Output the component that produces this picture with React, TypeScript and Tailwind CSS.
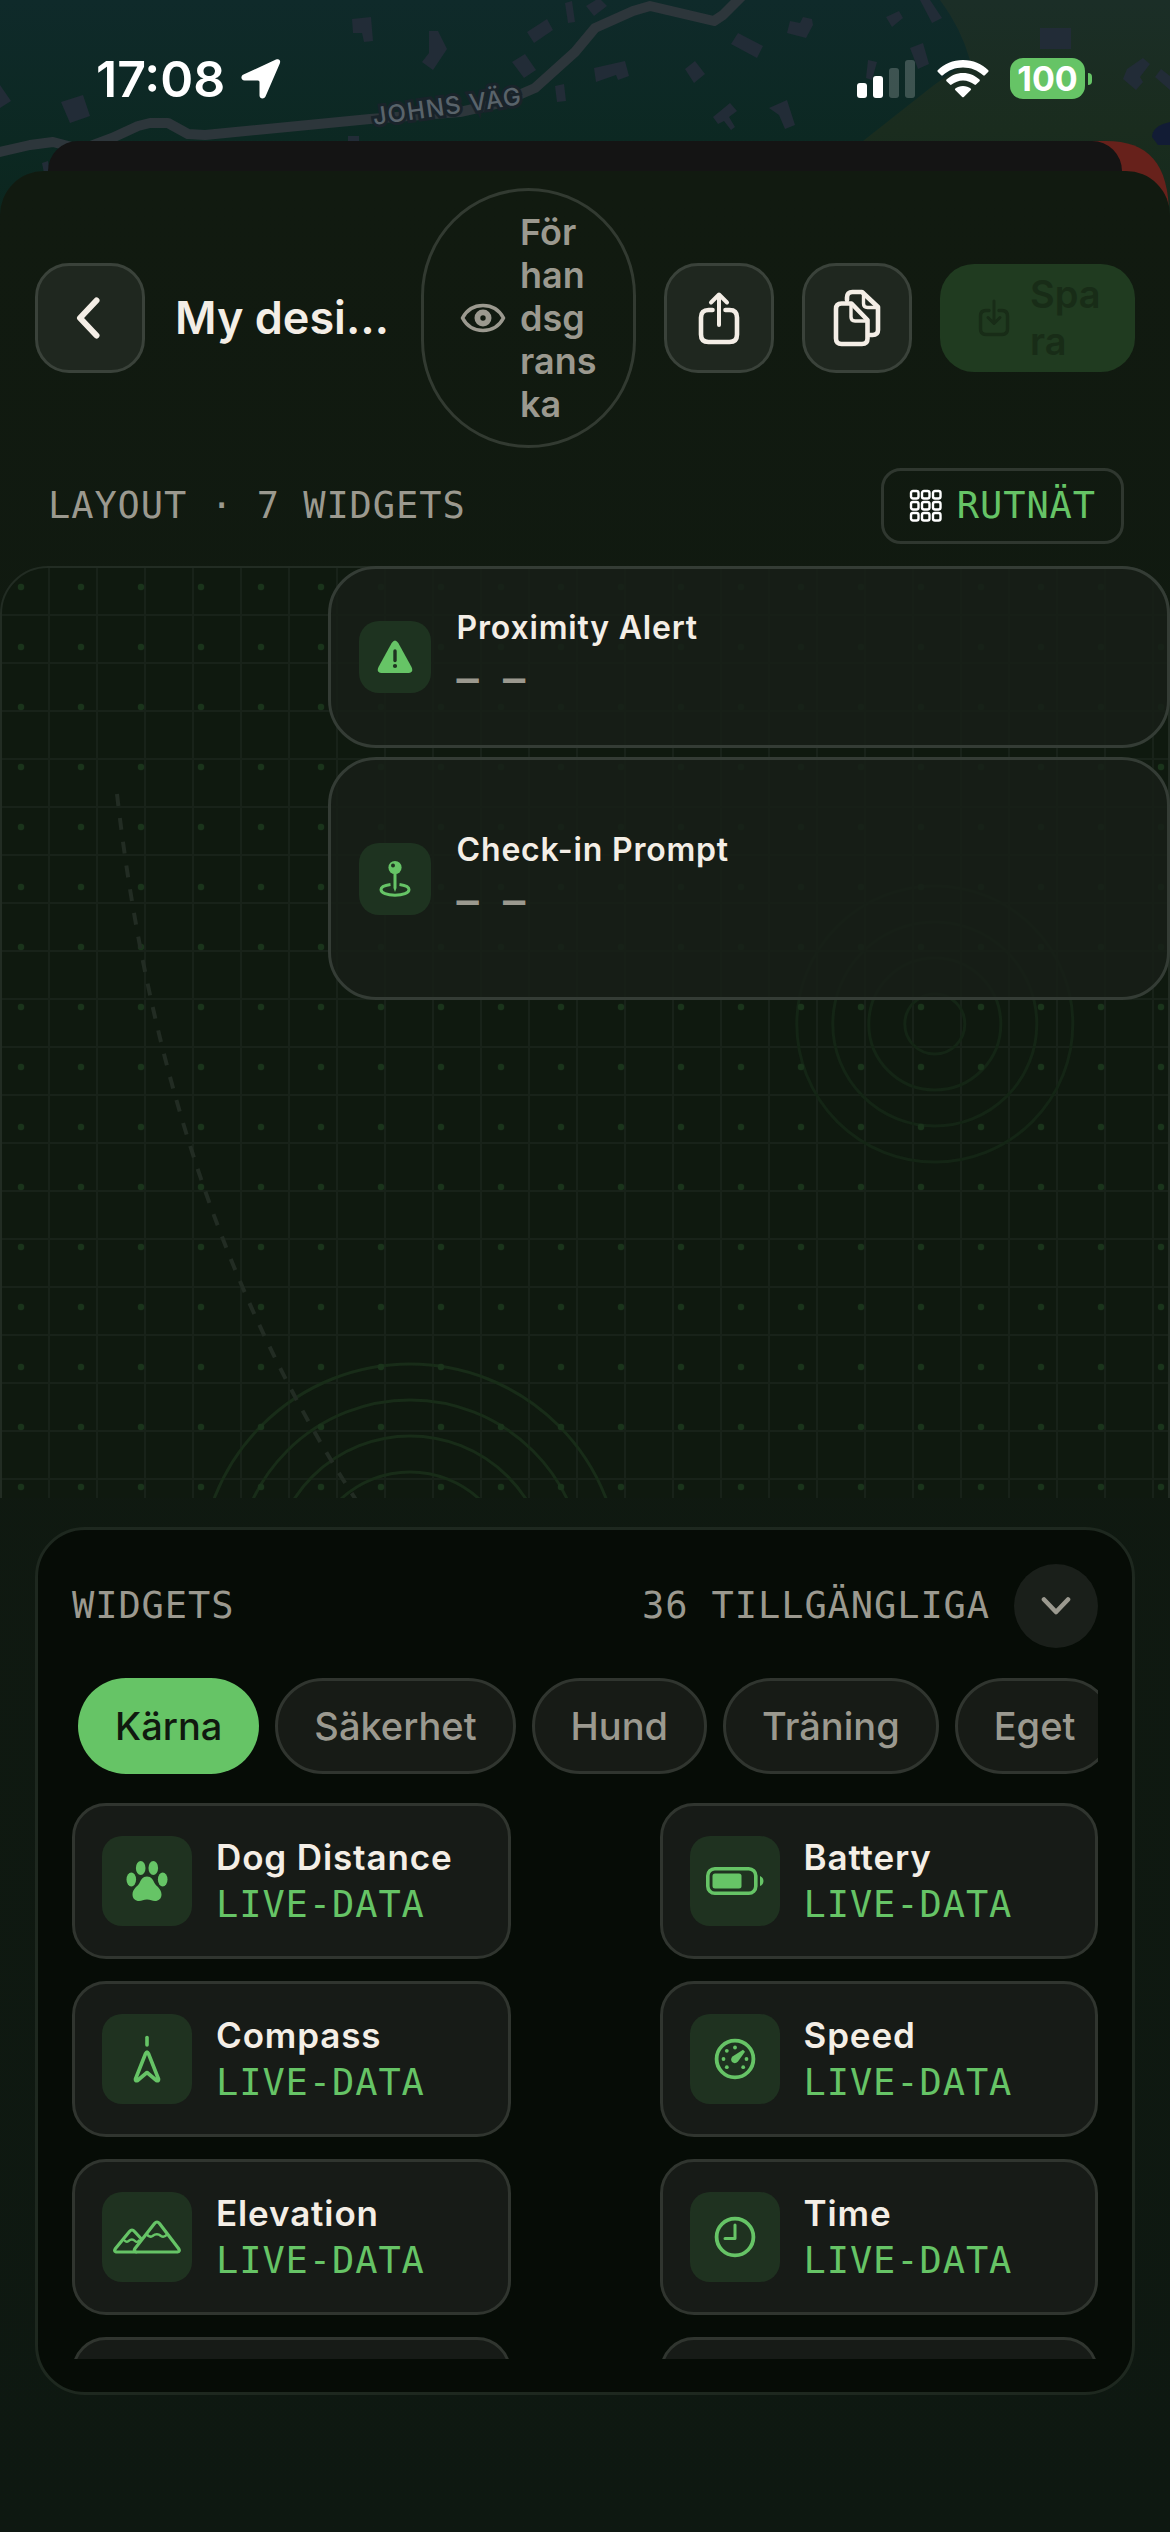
import type { ReactNode } from "react";

const buildings = [
  "352,19 371,17 373,41 364,42 362,33 353,33",
  "429,31 438,31 447,49 433,70 422,62 429,53",
  "527,32 547,19 553,30 534,43",
  "512,62 525,54 536,70 524,78",
  "555,86 564,84 566,101 557,102",
  "565,3 572,1 575,22 568,23",
  "586,6 599,-2 607,6 594,16",
  "594,68 625,61 629,76 618,80 616,75 596,82",
  "738,33 763,46 757,58 731,44",
  "790,21 800,23 803,17 812,19 813,25 806,38 787,33",
  "685,69 695,61 705,74 694,83",
  "713,117 730,103 737,111 729,117 735,127 731,130 724,121 718,124",
  "769,108 787,100 795,125 785,129 779,115",
  "886,17 899,11 903,18 892,27",
  "920,0 930,0 942,18 932,23",
  "910,48 923,43 929,64 918,69",
  "868,60 877,62 872,80 866,78",
  "1040,28 1071,28 1071,49 1040,49",
  "1143,58 1150,64 1140,77 1143,82 1136,90 1123,79 1127,69",
  "1155,77 1161,69 1170,76 1170,90",
  "0,85 11,101 0,108",
  "61,102 83,95 90,116 70,123",
  "348,136 359,136 359,141 348,141",
  "42,163 48,161 50,173 44,173",
];

function MapBackdrop() {
  return (
    <svg
      className="absolute inset-x-0 top-0 w-full h-[260px]"
      viewBox="0 0 1170 260"
      preserveAspectRatio="xMidYMin slice"
      aria-hidden="true"
    >
      <defs>
        <linearGradient id="water" x1="0" y1="0" x2="0" y2="1">
          <stop offset="0" stopColor="#0f2a2a" />
          <stop offset="0.55" stopColor="#0c2822" />
          <stop offset="1" stopColor="#0b251c" />
        </linearGradient>
        <linearGradient id="land" x1="0" y1="0" x2="0" y2="1">
          <stop offset="0" stopColor="#1b2e27" />
          <stop offset="0.5" stopColor="#1a2c1e" />
          <stop offset="1" stopColor="#12291d" />
        </linearGradient>
      </defs>
      <rect width="1170" height="260" fill="url(#water)" />
      <path d="M940 0Q961 28 970 60L934 85L863 141V260H1170V0Z" fill="url(#land)" />
      <g fill="#222c37">
        {buildings.map((points) => (
          <polygon key={points} points={points} />
        ))}
      </g>
      <path
        d="M-5 153L30 145L53 142L72 147H88L112 138L138 126L150 123H168L188 134L205 135L370 119L460 112L500 103L535 88L575 52L595 28L633 11L650 6L714 21L723 15L746 -8"
        fill="none"
        stroke="#2d363b"
        strokeWidth="10"
        strokeLinejoin="round"
      />
      <text
        x="374"
        y="125"
        transform="rotate(-8 374 125)"
        className="font-[Inter] text-[24px] font-medium tracking-wider"
        fill="#59636a"
        stroke="#19232a"
        strokeWidth="6"
        paintOrder="stroke"
      >
        JOHNS VÄG
      </text>
      <path d="M1152 137Q1152 128 1163 124L1170 122V145L1158 145Z" fill="#121c35" />
      <path d="M1080 141H1106C1148 141 1169 163 1169 216V240H1080Z" fill="#67211b" />
    </svg>
  );
}

function StatusBar() {
  return (
    <header className="relative flex items-center justify-between h-[141px] pt-4 pl-24 pr-[78px] text-white">
      <div className="flex items-center gap-4">
        <span className="text-[50px] leading-none font-semibold">17:08</span>
        <svg className="w-[40px] h-[40px]" viewBox="0 0 40 40" fill="currentColor" aria-hidden="true">
          <path d="M35 .6C38-.6 40 1 38.800 4.500L24.500 37.500C23.200 40.500 18.500 40 18.500 36.500V23Q18.500 21.500 17 21.500H3.500C0 21.500-.8 17 2.500 15.500Z" />
        </svg>
      </div>
      <div className="flex items-center">
        <svg className="w-[58px] h-[38px] mr-[22px]" viewBox="0 0 58 38" fill="currentColor" aria-hidden="true">
          <rect x="0" y="23" width="10" height="15" rx="3" />
          <rect x="16" y="16" width="10" height="22" rx="3" />
          <rect x="32" y="8" width="10" height="30" rx="3" opacity="0.2" />
          <rect x="48" y="0" width="10" height="38" rx="3" opacity="0.2" />
        </svg>
        <svg className="w-[52px] h-[38px] mr-[21px]" viewBox="0 0 52 38" fill="currentColor" aria-hidden="true">
          <path d="M26 0C36 0 45 4 51.300 10.200Q52 11 51.300 11.800L47.800 15.300Q47 16 46.200 15.300C40.500 10.300 33.500 7.600 26 7.600S11.500 10.300 5.800 15.300Q5 16 4.200 15.300L.7 11.800Q0 11 .7 10.200C7 4 16 0 26 0Z" />
          <path d="M26 13C32.500 13 38.300 15.600 42.500 19.600Q43.300 20.400 42.500 21.200L39 24.600Q38.200 25.300 37.400 24.600C34.300 22 30.300 20.400 26 20.400S17.700 22 14.600 24.600Q13.800 25.300 13 24.600L9.500 21.200Q8.700 20.400 9.500 19.600C13.700 15.600 19.500 13 26 13Z" />
          <path d="M26 26C29 26 31.600 27 33.700 28.600Q34.500 29.300 33.800 30.100L26.800 37Q26 37.700 25.200 37L18.200 30.100Q17.500 29.300 18.300 28.600C20.400 27 23 26 26 26Z" />
        </svg>
        <span className="flex items-center justify-center w-[75px] h-[41px] rounded-[13px] bg-[#66c466] text-[34px] leading-none font-bold">
          100
        </span>
        <span className="w-1 h-3 ml-[3px] rounded-r-full bg-[#66c466]" />
      </div>
    </header>
  );
}

function SquareButton({ label, children }: { label: string; children: ReactNode }) {
  return (
    <button
      type="button"
      aria-label={label}
      className="flex shrink-0 items-center justify-center size-[110px] rounded-[34px] border-3 border-[#3a423a] bg-[#1f271f]"
    >
      {children}
    </button>
  );
}

function EditorHeader() {
  return (
    <div className="flex items-center gap-7 px-[35px] pt-[17px] text-[#f4eee6]">
      <SquareButton label="Tillbaka">
        <svg className="w-[24px] h-[46px] mr-1" viewBox="0 0 24 46" fill="none" stroke="currentColor" strokeWidth="6" strokeLinecap="round" strokeLinejoin="round">
          <path d="M20.500 5.500L4 23L20.500 40.500" />
        </svg>
      </SquareButton>
      <h1 className="min-w-0 flex-1 pl-[2px] whitespace-nowrap text-[45px] leading-[56px] font-semibold">My desi…</h1>
      <button
        type="button"
        className="flex shrink-0 items-center gap-[14px] w-[215px] h-[260px] pl-9 rounded-full border-3 border-[#323a31] text-left text-[36px] leading-[43px] font-semibold text-[#9b998f]"
      >
        <svg className="w-[46px] h-[34px] shrink-0" viewBox="0 0 46 34" fill="none" stroke="currentColor" aria-hidden="true">
          <path d="M2.500 17C7 8.500 14 4.500 23 4.500S39 8.500 43.500 17C39 25.500 32 29.500 23 29.500S7 25.500 2.500 17Z" strokeWidth="3.600" strokeLinejoin="round" />
          <circle cx="23" cy="17" r="5.600" strokeWidth="5.800" />
        </svg>
        <span>
          För
          <br />
          han
          <br />
          dsg
          <br />
          rans
          <br />
          ka
        </span>
      </button>
      <SquareButton label="Dela">
        <svg className="w-[44px] h-[54px]" viewBox="0 0 44 54" fill="none" stroke="currentColor" strokeWidth="4.600" strokeLinecap="round" strokeLinejoin="round">
          <path d="M15.500 19H11.500Q4 19 4 26.500V43.500Q4 51 11.500 51H32.500Q40 51 40 43.500V26.500Q40 19 32.500 19H28.500" />
          <path d="M22 34V4M14 11.500L22 3.500L30 11.500" strokeWidth="4" />
        </svg>
      </SquareButton>
      <SquareButton label="Kopiera">
        <svg className="w-[48px] h-[58px]" viewBox="0 0 48 58" fill="none" stroke="currentColor" strokeWidth="4.600" strokeLinejoin="round" strokeLinecap="round">
          <path d="M14 11V8.500Q14 3 19.500 3H29L45 18V41Q45 46 39.500 46H37" />
          <path d="M30.500 4V14.500Q30.500 18.500 34.500 18.500H44" strokeWidth="3.400" />
          <path d="M3 20Q3 14.500 8.500 14.500H18.500L34.500 31V49.500Q34.500 55 29 55H8.500Q3 55 3 49.500Z" />
          <path d="M18 15.500V28Q18 32 22 32H33.500" strokeWidth="3.400" />
        </svg>
      </SquareButton>
      <button
        type="button"
        disabled
        className="flex shrink-0 items-center w-[195px] h-[108px] gap-5 pl-[38px] rounded-[34px] bg-[#203b20] text-left text-[38px] leading-[47px] font-semibold text-[#182c17]"
      >
        <svg className="w-[32px] h-[38px] shrink-0" viewBox="0 0 32 38" fill="none" stroke="currentColor" strokeWidth="3.400" strokeLinecap="round" strokeLinejoin="round" aria-hidden="true">
          <path d="M11 11.500H8Q2.500 11.500 2.500 17V30Q2.500 35.500 8 35.500H24Q29.500 35.500 29.500 30V17Q29.500 11.500 24 11.500H21" />
          <path d="M16 2V24M10 18.500L16 24.500L22 18.500" strokeWidth="3" />
        </svg>
        <span>
          Spa
          <br />
          ra
        </span>
      </button>
    </div>
  );
}

function LayoutBar() {
  return (
    <div className="flex items-center justify-between pt-5 pb-[22px] pl-12 pr-[46px] font-['DejaVu_Sans_Mono',monospace] text-[37px] leading-[44px] tracking-wide">
      <p className="text-[#9b998f]">LAYOUT · 7 WIDGETS</p>
      <button
        type="button"
        className="flex items-center gap-[14px] h-[76px] px-[25px] rounded-[20px] border-3 border-[#2f372f] tracking-wide text-[#66c466]"
      >
        <svg className="w-[34px] h-[34px]" viewBox="0 0 34 34" fill="none" stroke="white" strokeWidth="2.400" aria-hidden="true">
          {[2, 13, 24].map((y) =>
            [2, 13, 24].map((x) => <rect key={`${x}-${y}`} x={x} y={y} width="7.500" height="7.500" rx="2" />),
          )}
        </svg>
        RUTNÄT
      </button>
    </div>
  );
}

function CanvasGrid() {
  return (
    <div className="absolute inset-x-0 top-0 h-[1144px] overflow-hidden rounded-[48px] border-2 border-[#222c23] bg-[#0f190f]">
      <svg className="w-full h-full" fill="none" aria-hidden="true">
        <defs>
          <pattern id="lines" x="-2" y="-2" width="48" height="48" patternUnits="userSpaceOnUse">
            <path d="M0 1H48M1 0V48" stroke="#182219" strokeWidth="2" />
          </pattern>
          <pattern id="dots" x="-2" y="-2" width="60" height="60" patternUnits="userSpaceOnUse">
            <circle cx="21" cy="21" r="3.200" fill="#1a341b" />
          </pattern>
        </defs>
        <rect width="100%" height="100%" fill="url(#lines)" />
        <g stroke="#182c18" strokeWidth="3">
          {[102, 138, 174, 210].map((r) => (
            <circle key={r} cx="35%" cy="1006" r={r} />
          ))}
        </g>
        <g stroke="#142515" strokeWidth="3">
          {[30, 66, 102, 138].map((r) => (
            <circle key={r} cx="80%" cy="456" r={r} />
          ))}
        </g>
        <rect width="100%" height="100%" fill="url(#dots)" />
        <path d="M115 226Q168 692 407 1007" stroke="#222c23" strokeWidth="4" strokeDasharray="12 12" />
      </svg>
    </div>
  );
}

function CanvasCard({ title, height, icon }: { title: string; height: string; icon: ReactNode }) {
  return (
    <article
      className={`relative flex items-center gap-[26px] px-7 rounded-[48px] border-3 border-[#343c35] bg-[#171f18]/85 ${height}`}
    >
      <span className="flex items-center justify-center size-[72px] rounded-[20px] bg-[#1e3320] text-[#66c466]">{icon}</span>
      <div>
        <h2 className="text-[32px] leading-[44px] font-semibold tracking-wide text-[#f4eee6]">{title}</h2>
        <p className="font-['DejaVu_Sans_Mono',monospace] text-[37px] leading-[58px] font-bold tracking-wide text-[#9b998f]">— —</p>
      </div>
    </article>
  );
}

function WarningIcon() {
  return (
    <svg className="w-[36px] h-[34px]" viewBox="0 0 36 34" aria-hidden="true">
      <path d="M14.700 3Q18-2 21.300 3L34.500 27Q37 32.500 31.500 33H4.500Q-1 32.500 1.500 27Z" fill="currentColor" />
      <path d="M18 11V20.500" stroke="#1e3320" strokeWidth="3.400" strokeLinecap="round" />
      <circle cx="18" cy="26" r="2.100" fill="#1e3320" />
    </svg>
  );
}

function PinIcon() {
  return (
    <svg className="w-[32px] h-[38px]" viewBox="0 0 32 38" fill="none" stroke="currentColor" aria-hidden="true">
      <path d="M11.500 24.500C5.500 25.300 2 27 2 29.500C2 33 8 35.300 16 35.300S30 33 30 29.500C30 27 26.500 25.300 20.500 24.500" strokeWidth="3" />
      <path d="M14.500 11H17.500V28L16 32L14.500 28Z" fill="currentColor" stroke="none" />
      <circle cx="16" cy="7.500" r="6.600" fill="currentColor" stroke="none" />
      <circle cx="14" cy="5.500" r="2" fill="#1e3320" stroke="none" />
    </svg>
  );
}

function PawIcon() {
  return (
    <svg className="w-[42px] h-[42px]" viewBox="0 0 42 42" fill="currentColor" aria-hidden="true">
      <ellipse cx="14.700" cy="8" rx="4.800" ry="7" />
      <ellipse cx="27.300" cy="8" rx="4.800" ry="7" />
      <ellipse cx="5.300" cy="19.500" rx="4.800" ry="7" />
      <ellipse cx="36.700" cy="19.500" rx="4.800" ry="7" />
      <path d="M21 16.500C25.500 16.500 26.800 19.500 28.500 23C30.200 26.500 35.500 28.500 35.500 34.500C35.500 38.800 32.500 41 29 41C26 41 24.500 39.500 21 39.500S16 41 13 41C9.500 41 6.500 38.800 6.500 34.500C6.500 28.500 11.800 26.500 13.500 23C15.200 19.500 16.500 16.500 21 16.500Z" />
    </svg>
  );
}

function BatteryIcon() {
  return (
    <svg className="w-[58px] h-[28px]" viewBox="0 0 58 28" fill="none" aria-hidden="true">
      <rect x="1.800" y="1.800" width="48" height="24.400" rx="7" stroke="currentColor" strokeWidth="3.600" />
      <rect x="6.500" y="6.500" width="29" height="15" rx="2.500" fill="currentColor" />
      <path d="M54 9Q57.500 10.500 57.500 14T54 19Z" fill="currentColor" />
    </svg>
  );
}

function CompassIcon() {
  return (
    <svg className="w-[30px] h-[48px]" viewBox="0 0 30 48" fill="none" stroke="currentColor" strokeWidth="3.600" strokeLinecap="round" strokeLinejoin="round" aria-hidden="true">
      <path d="M15 2.500V10" />
      <path d="M13.600 18.500Q15 15.500 16.400 18.500L26.500 44Q26.800 46.500 24.500 45.500L15 37.500L5.500 45.500Q3.200 46.500 3.500 44Z" />
    </svg>
  );
}

function SpeedIcon() {
  return (
    <svg className="w-[42px] h-[42px]" viewBox="0 0 42 42" fill="currentColor" aria-hidden="true">
      <circle cx="21" cy="21" r="18.400" fill="none" stroke="currentColor" strokeWidth="3.800" />
      <circle cx="21" cy="9.500" r="1.900" />
      <circle cx="12.800" cy="12.800" r="1.900" />
      <circle cx="9.500" cy="21" r="1.900" />
      <circle cx="12.800" cy="29.200" r="1.900" />
      <circle cx="29.200" cy="29.200" r="1.900" />
      <circle cx="32.500" cy="21" r="1.900" />
      <path d="M29 11.800L31 13.800L24 23.500Q21 26.500 18 24Q16 21 18.500 18.500Z" />
    </svg>
  );
}

function MountainIcon() {
  return (
    <svg className="w-[68px] h-[34px]" viewBox="0 0 68 34" fill="none" stroke="currentColor" strokeWidth="3.200" strokeLinecap="round" strokeLinejoin="round" aria-hidden="true">
      <path d="M23 32H3Q.5 31.500 2.500 28.500L16.500 11.500Q19 8.500 21.500 11.500L27.500 18" />
      <path d="M23.500 32Q20 31.500 22 28.500L41.500 3.500Q44 .5 46.500 3.500L65.500 28.500Q67.500 31.500 64.500 32Z" />
      <path d="M11.500 20.500Q13.500 22.500 15.500 21Q19 18 22 21Q24 23 26 20.500" strokeWidth="2.400" />
      <path d="M34 14.500Q36.500 18 39.500 16Q44 12.500 48 16Q51 18 54 14.500" strokeWidth="2.600" />
    </svg>
  );
}

function ClockIcon() {
  return (
    <svg className="w-[42px] h-[42px]" viewBox="0 0 42 42" fill="none" stroke="currentColor" strokeLinecap="round" strokeLinejoin="round" aria-hidden="true">
      <circle cx="21" cy="21" r="18.400" strokeWidth="3.800" />
      <path d="M21 9V22.500H11" strokeWidth="3" />
    </svg>
  );
}

const categories = ["Kärna", "Säkerhet", "Hund", "Träning", "Eget"];

const widgets = [
  { name: "Dog Distance", icon: <PawIcon /> },
  { name: "Battery", icon: <BatteryIcon /> },
  { name: "Compass", icon: <CompassIcon /> },
  { name: "Speed", icon: <SpeedIcon /> },
  { name: "Elevation", icon: <MountainIcon /> },
  { name: "Time", icon: <ClockIcon /> },
];

function WidgetPanel() {
  return (
    <section className="mt-[29px] mx-[35px] px-[34px] pt-[34px] pb-[33px] rounded-[50px] border-3 border-[#1e281f] bg-[#060c06]">
      <div className="flex items-center gap-6 font-['DejaVu_Sans_Mono',monospace] text-[37px] leading-[44px] tracking-wide text-[#9b998f]">
        <h2 className="flex-1">WIDGETS</h2>
        <p>36 TILLGÄNGLIGA</p>
        <button
          type="button"
          aria-label="Fäll ihop"
          className="flex items-center justify-center size-[84px] rounded-full bg-[#1a1f1a]"
        >
          <svg className="w-[30px] h-[20px]" viewBox="0 0 30 20" fill="none" stroke="currentColor" strokeWidth="4.600" strokeLinecap="round" strokeLinejoin="round">
            <path d="M3 3.500L15 16L27 3.500" />
          </svg>
        </button>
      </div>

      {/* Category chips */}
      <div className="flex gap-4 mt-[30px] pl-[6px] overflow-hidden">
        {categories.map((category, index) => (
          <button
            key={category}
            type="button"
            className={
              index === 0
                ? "shrink-0 h-24 px-[37px] rounded-full bg-[#66c466] text-[38px] font-medium text-[#10190f]"
                : "shrink-0 h-24 px-9 rounded-full border-3 border-[#30352f] bg-[#171b16] text-[38px] font-medium text-[#9b998f]"
            }
          >
            {category}
          </button>
        ))}
      </div>

      {/* Available widgets */}
      <div className="grid grid-cols-2 content-start gap-x-[149px] gap-y-[22px] mt-[29px] h-[556px] overflow-hidden">
        {widgets.map((widget) => (
          <button
            key={widget.name}
            type="button"
            className="flex items-center gap-6 h-[156px] px-[27px] rounded-[34px] border-3 border-[#30352f] bg-[#171b17] text-left text-[#66c466]"
          >
            <span className="flex shrink-0 items-center justify-center size-[90px] rounded-[20px] bg-[#1f3220]">
              {widget.icon}
            </span>
            <span className="flex flex-col whitespace-nowrap">
              <span className="text-[35px] leading-[48px] font-semibold tracking-wide text-[#f4eee6]">{widget.name}</span>
              <span className="font-['DejaVu_Sans_Mono',monospace] text-[37px] leading-[48px] tracking-wide">LIVE-DATA</span>
            </span>
          </button>
        ))}
        <div className="h-[156px] rounded-[34px] border-3 border-[#30352f] bg-[#171b17]" />
        <div className="h-[156px] rounded-[34px] border-3 border-[#30352f] bg-[#171b17]" />
      </div>
    </section>
  );
}

export default function App() {
  return (
    <div className="relative flex flex-col min-h-screen bg-[#0e1811] font-[Inter,sans-serif]">
      <MapBackdrop />
      <StatusBar />
      <div className="relative h-[30px] mx-12 rounded-t-[34px] bg-[#141414]" />
      <main className="relative flex-1 rounded-t-[44px] bg-linear-to-b from-[#111a10] to-[#0e1811]">
        <EditorHeader />
        <LayoutBar />
        <div className="relative h-[932px] overflow-hidden">
          <CanvasGrid />
          <div className="flex flex-col gap-[9px] w-[72%] ml-auto">
            <CanvasCard title="Proximity Alert" height="h-[182px]" icon={<WarningIcon />} />
            <CanvasCard title="Check-in Prompt" height="h-[243px]" icon={<PinIcon />} />
          </div>
        </div>
        <WidgetPanel />
      </main>
    </div>
  );
}
